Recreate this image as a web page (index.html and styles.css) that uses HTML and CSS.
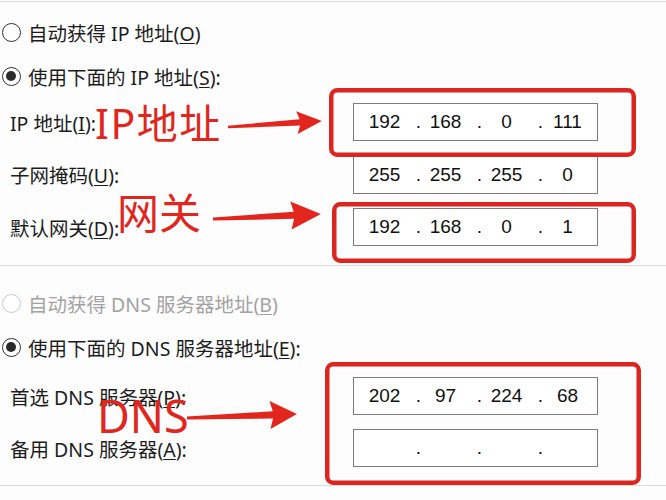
FILE: index.html
```html
<!DOCTYPE html>
<html lang="zh-CN">
<head>
  <meta charset="UTF-8">
  <meta name="viewport" content="width=device-width, initial-scale=1.0">
  <title>Internet 协议版本 4 (TCP/IPv4) 属性</title>
  <link rel="stylesheet" href="styles.css">
</head>
<body>
  <div class="screen">
    <!-- IP address block -->
    <section class="group group--ip">
      <div class="choice"><span class="radio"></span><span>自动获得 IP 地址(<u>O</u>)</span></div>
      <div class="choice"><span class="radio radio--on"></span><span>使用下面的 IP 地址(<u>S</u>):</span></div>
      <div class="fields">
        <div class="field">
          <span class="field__label">IP 地址(<u>I</u>):</span>
          <div class="ip-box"><span>192</span><i>.</i><span>168</span><i>.</i><span>0</span><i>.</i><span>111</span></div>
        </div>
        <div class="field">
          <span class="field__label">子网掩码(<u>U</u>):</span>
          <div class="ip-box"><span>255</span><i>.</i><span>255</span><i>.</i><span>255</span><i>.</i><span>0</span></div>
        </div>
        <div class="field">
          <span class="field__label">默认网关(<u>D</u>):</span>
          <div class="ip-box"><span>192</span><i>.</i><span>168</span><i>.</i><span>0</span><i>.</i><span>1</span></div>
        </div>
      </div>
    </section>

    <!-- DNS block -->
    <section class="group group--dns">
      <div class="choice choice--disabled"><span class="radio"></span><span>自动获得 DNS 服务器地址(<u>B</u>)</span></div>
      <div class="choice"><span class="radio radio--on"></span><span>使用下面的 DNS 服务器地址(<u>E</u>):</span></div>
      <div class="fields fields--dns">
        <div class="field">
          <span class="field__label">首选 DNS 服务器(<u>P</u>):</span>
          <div class="ip-box"><span>202</span><i>.</i><span>97</span><i>.</i><span>224</span><i>.</i><span>68</span></div>
        </div>
        <div class="field">
          <span class="field__label">备用 DNS 服务器(<u>A</u>):</span>
          <div class="ip-box"><span></span><i>.</i><span></span><i>.</i><span></span><i>.</i><span></span></div>
        </div>
      </div>
    </section>

    <!-- hand-drawn notes on top -->
    <svg class="marks" width="666" height="500" viewBox="0 0 666 500">
      <g fill="none" stroke="#dc2420" stroke-width="4.5">
        <rect x="331.25" y="90.25" width="302.5" height="64.5" rx="6"/>
        <rect x="334.25" y="204.25" width="299.5" height="56.5" rx="6"/>
        <rect x="327.25" y="364.25" width="311.5" height="118.5" rx="6"/>
      </g>
      <g fill="#e3261d">
        <polygon transform="translate(228 127) rotate(-3.65)" points="0,-1.3 72,-3.2 69,-11.5 94,0 69,11.5 72,3.2 0,1.3"/>
        <polygon transform="translate(213 219) rotate(-2.65)" points="0,-1.5 81,-3.6 78,-14 108,0 78,14 81,3.6 0,1.5"/>
        <polygon transform="translate(187 418) rotate(-2.1)" points="0,-1.5 86,-3.6 83,-14 110,0 83,14 86,3.6 0,1.5"/>
      </g>
    </svg>
    <span class="note note--ip">IP地址</span>
    <span class="note note--gw">网关</span>
    <span class="note note--dns">DNS</span>
  </div>
</body>
</html>
```

FILE: styles.css
```css
:root {
  --text: #1c1c1c;
  --text-disabled: #a2a2a2;
  --rule: #dadada;
  --box-border: #7c7c7c;
  --note-red: #e0261d;
  /* Latin from Noto Sans, Chinese falls through to the CJK face */
  --ui-font: "Noto Sans", "Noto Sans CJK SC", sans-serif;
  --digit-font: "Liberation Sans", Arial, sans-serif;
}

body {
  margin: 0;
  background: #fdfdfd;
}

.screen {
  position: relative;
  width: 666px;
  height: 500px;
  overflow: hidden;
  padding-top: 1px;
  box-sizing: border-box;
  font-family: var(--ui-font);
  font-size: 19.5px;
  color: var(--text);
  background: #fdfdfd;
}

.group {
  border-top: 1px solid var(--rule);
}

.group--ip {
  padding: 16px 0 19px;
}

.group--dns {
  padding: 23px 0 18px;
  border-bottom: 1px solid var(--rule);
}

/* radio rows */
.choice {
  display: flex;
  align-items: center;
  gap: 7px;
  height: 28px;
  padding-left: 2px;
  white-space: nowrap;
}

.choice + .choice {
  margin-top: 16px;
}

.choice u {
  text-underline-offset: 2px;
}

.radio {
  position: relative;
  width: 19px;
  height: 19px;
  border: 1.5px solid #333;
  border-radius: 50%;
  box-sizing: border-box;
  background: #fff;
  flex: none;
}

.radio--on::after {
  content: "";
  position: absolute;
  left: 3px;
  top: 3px;
  width: 10px;
  height: 10px;
  border-radius: 50%;
  background: #2b2b2b;
}

.choice--disabled {
  color: var(--text-disabled);
}

.choice--disabled .radio {
  border-color: #c9c9c9;
}

/* label + address box rows */
.fields {
  display: flex;
  flex-direction: column;
  gap: 14.5px;
  margin-top: 13px;
}

.fields--dns {
  gap: 14px;
  margin-top: 16px;
}

.field {
  display: grid;
  grid-template-columns: 353px 245px;
  align-items: center;
  height: 38px;
}

.field__label {
  padding-left: 10px;
  white-space: nowrap;
}

.field__label u {
  text-underline-offset: 2px;
}

.ip-box {
  display: grid;
  grid-template-columns: 49px 12px 49px 12px 49px 12px 49px;
  height: 38px;
  padding-left: 6px;
  box-sizing: border-box;
  border: 1px solid var(--box-border);
  background: #fff;
  font-family: var(--digit-font);
  font-size: 19px;
  line-height: 36px;
  color: #111;
}

.ip-box span {
  text-align: center;
}

.ip-box i {
  font-style: normal;
  text-align: right;
}

/* annotations */
.marks {
  position: absolute;
  left: 0;
  top: 0;
  pointer-events: none;
}

.note {
  position: absolute;
  font-family: var(--ui-font);
  line-height: 1;
  color: var(--note-red);
  white-space: nowrap;
}

.note--ip {
  left: 95px;
  top: 103px;
  font-size: 41px;
  letter-spacing: 1.5px;
}

.note--gw {
  left: 117px;
  top: 192px;
  font-size: 42px;
}

.note--dns {
  left: 97px;
  top: 393px;
  font-size: 45px;
}
```
